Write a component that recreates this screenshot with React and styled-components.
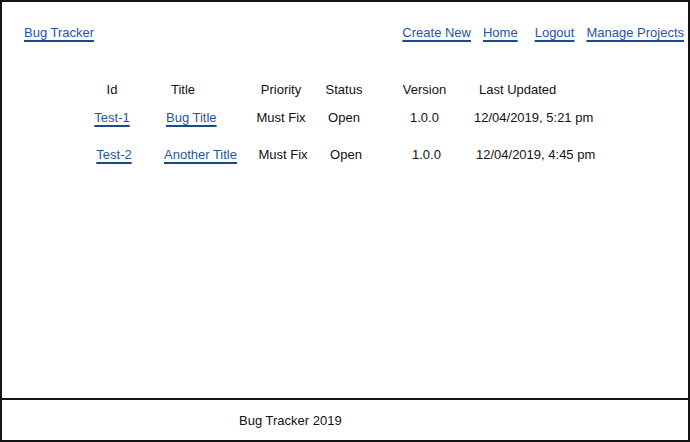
import React from "react";
import styled, { createGlobalStyle } from "styled-components";

const GlobalStyle = createGlobalStyle`
  html, body { margin: 0; padding: 0; background: #fff; }
  body { font-family: "Liberation Sans", Arial, sans-serif; color: #111; }
  * { box-sizing: border-box; }
`;

const Frame = styled.div`
  width: 690px;
  height: 442px;
  border: 2px solid #141414;
  display: flex;
  flex-direction: column;
  background: #fff;
`;

const Main = styled.main`
  flex: 1;
  padding: 20px 4px 0 22px;
`;

const TopBar = styled.header`
  display: flex;
  align-items: center;
  justify-content: space-between;
  height: 20px;
`;

const Nav = styled.nav`
  display: flex;
  align-items: center;
`;

const Link = styled.a`
  font-size: 13px;
  color: #1f56a6;
  text-decoration: underline;
  text-decoration-color: #1a4a8c;
  text-decoration-thickness: 1.5px;
  text-underline-offset: 3px;
  cursor: pointer;
  white-space: nowrap;
  margin-left: ${(p) => p.$space || 0}px;
`;

const Table = styled.div`
  margin-top: 33px;
  margin-left: 55px;
`;

const Row = styled.div`
  display: grid;
  grid-template-columns: 66px 104px 64px 62px 99px auto;
  align-items: center;
  height: ${(p) => p.$h}px;
  padding-left: ${(p) => p.$shift || 0}px;
`;

const Cell = styled.div`
  font-size: 13px;
  color: #111;
  white-space: nowrap;
  text-align: ${(p) => p.$align || "center"};
  padding-left: ${(p) => p.$pad || 0}px;
`;

const Footer = styled.footer`
  height: 42px;
  border-top: 2px solid #141414;
  display: flex;
  align-items: center;
  padding-left: 237px;
  font-size: 13px;
  color: #111;
`;

const columns = [
  { key: "id", label: "Id", align: "center", hpad: 0 },
  { key: "title", label: "Title", align: "left", hpad: 26 },
  { key: "priority", label: "Priority", align: "center", hpad: 0 },
  { key: "status", label: "Status", align: "center", hpad: 0 },
  { key: "version", label: "Version", align: "center", hpad: 0 },
  { key: "updated", label: "Last Updated", align: "left", hpad: 5 },
];

const bugs = [
  { id: "Test-1", title: "Bug Title", priority: "Must Fix", status: "Open", version: "1.0.0", updated: "12/04/2019, 5:21 pm", h: 28, shift: 0, tpad: 21 },
  { id: "Test-2", title: "Another Title", priority: "Must Fix", status: "Open", version: "1.0.0", updated: "12/04/2019, 4:45 pm", h: 46, shift: 2, tpad: 17 },
];

export default function App() {
  return (
    <>
      <GlobalStyle />
      <Frame>
        <Main>
          <TopBar>
            <Link>Bug Tracker</Link>
            <Nav>
              <Link>Create New</Link>
              <Link $space={12}>Home</Link>
              <Link $space={17}>Logout</Link>
              <Link $space={12}>Manage Projects</Link>
            </Nav>
          </TopBar>
          <Table>
            <Row $h={28}>
              {columns.map((c) => (
                <Cell key={c.key} $align={c.align} $pad={c.hpad}>
                  {c.label}
                </Cell>
              ))}
            </Row>
            {bugs.map((b) => (
              <Row key={b.id} $h={b.h} $shift={b.shift}>
                <Cell><Link>{b.id}</Link></Cell>
                <Cell $align="left" $pad={b.tpad}><Link>{b.title}</Link></Cell>
                <Cell>{b.priority}</Cell>
                <Cell>{b.status}</Cell>
                <Cell>{b.version}</Cell>
                <Cell $align="left" $pad={0}>{b.updated}</Cell>
              </Row>
            ))}
          </Table>
        </Main>
        <Footer>Bug Tracker 2019</Footer>
      </Frame>
    </>
  );
}
